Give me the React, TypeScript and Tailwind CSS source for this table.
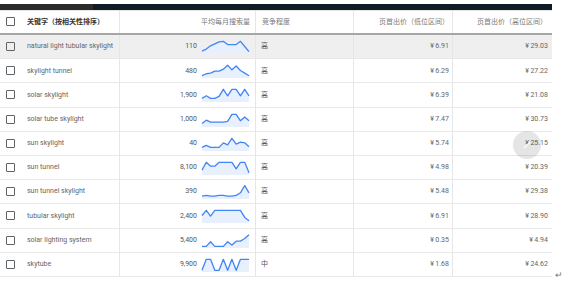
import React from "react";

type Row = { kw: string; vol: string; comp: string; low: string; high: string; pts: number[] };

const rows: Row[] = [
  { kw: "natural light tubular skylight", vol: "110", comp: "高", low: "6.91", high: "29.03", pts: [0.15, 0.3, 0.55, 0.7, 0.85, 0.9, 0.65, 0.65, 0.65, 0.9, 0.5, 0.1] },
  { kw: "skylight tunnel", vol: "480", comp: "高", low: "6.29", high: "27.22", pts: [0.1, 0.25, 0.3, 0.45, 0.45, 0.6, 0.9, 0.55, 0.85, 0.5, 0.3, 0.1] },
  { kw: "solar skylight", vol: "1,900", comp: "高", low: "6.39", high: "21.08", pts: [0.2, 0.4, 0.2, 0.2, 0.35, 0.9, 0.4, 0.9, 0.9, 0.4, 0.9, 0.4] },
  { kw: "solar tube skylight", vol: "1,000", comp: "高", low: "7.47", high: "30.73", pts: [0.2, 0.45, 0.3, 0.3, 0.3, 0.3, 0.35, 0.9, 0.9, 0.4, 0.7, 0.4] },
  { kw: "sun skylight", vol: "40", comp: "高", low: "5.74", high: "25.15", pts: [0.2, 0.35, 0.2, 0.2, 0.2, 0.55, 0.4, 0.9, 0.45, 0.6, 0.55, 0.25] },
  { kw: "sun tunnel", vol: "8,100", comp: "高", low: "4.98", high: "20.39", pts: [0.3, 0.9, 0.6, 0.6, 0.9, 0.9, 0.9, 0.9, 0.4, 0.9, 0.9, 0.1] },
  { kw: "sun tunnel skylight", vol: "390", comp: "高", low: "5.48", high: "29.38", pts: [0.15, 0.2, 0.15, 0.15, 0.2, 0.2, 0.15, 0.15, 0.2, 0.4, 0.95, 0.4] },
  { kw: "tubular skylight", vol: "2,400", comp: "高", low: "6.91", high: "28.90", pts: [0.5, 0.9, 0.45, 0.9, 0.9, 0.9, 0.9, 0.9, 0.9, 0.9, 0.35, 0.1] },
  { kw: "solar lighting system", vol: "5,400", comp: "高", low: "0.35", high: "4.94", pts: [0.05, 0.05, 0.4, 0.05, 0.05, 0.05, 0.4, 0.15, 0.45, 0.45, 0.65, 0.95] },
  { kw: "skytube", vol: "9,900", comp: "中", low: "1.68", high: "24.62", pts: [0.05, 0.9, 0.9, 0.05, 0.05, 0.9, 0.05, 0.9, 0.05, 0.9, 0.9, 0.9] },
];

function Spark({ pts }: { pts: number[] }) {
  const w = 47;
  const h = 15;
  const coords = pts.map((v, i) => [(i * w) / (pts.length - 1), 1 + (1 - v) * 13]);
  const line = coords.map(([x, y]) => `${x.toFixed(2)},${y.toFixed(2)}`).join(" ");
  const area = `0,${h} ${line} ${w},${h}`;
  return (
    <svg width={w} height={h} viewBox={`0 0 ${w} ${h}`} className="shrink-0 overflow-visible">
      <polygon points={area} fill="#e8f0fe" />
      <polyline points={line} fill="none" stroke="#4285f4" strokeWidth={1.3} strokeLinejoin="round" />
    </svg>
  );
}

function Box() {
  return <div className="w-[9px] h-[9px] border-[1.5px] border-[#5f6368] rounded-[1px] shrink-0" />;
}

function Price({ v }: { v: string }) {
  return (
    <span className="whitespace-nowrap">
      <span className="mr-[1.5px]">¥</span>
      {v}
    </span>
  );
}

export default function App() {
  const font = { fontFamily: 'Roboto, "Noto Sans CJK SC", sans-serif' };
  return (
    <div className="w-[575px] h-[285px] bg-white relative overflow-hidden" style={font}>
      <div className="h-[4px]" />
      <div className="flex w-[552px] h-[5.5px]">
        <div className="w-[93px] bg-[#2a2a2a]" />
        <div className="flex-1 bg-[#0f1b26]" />
      </div>
      <div className="flex items-end">
        <div className="w-[552px]">
          {/* header */}
          <div className="flex h-[25.5px] border-t border-[#e4e4e4] border-b-2 border-b-[#a6a6a6] text-[7px] text-[#7a7a7a]">
            <div className="w-[120px] flex items-center pl-[6px] gap-[12px] border-r border-[#e6e6e6]">
              <Box />
              <span className="font-bold text-[#333]">关键字（按相关性排序）</span>
            </div>
            <div className="w-[136px] flex items-center justify-end pr-[5px] border-r border-[#e6e6e6]">平均每月搜索量</div>
            <div className="w-[98px] flex items-center pl-[6px] border-r border-[#e6e6e6]">竞争程度</div>
            <div className="w-[99px] flex items-center justify-end pr-[3px] border-r border-[#e6e6e6]">页首出价（低位区间）</div>
            <div className="w-[99px] flex items-center justify-end pr-[5px]">页首出价（高位区间）</div>
          </div>
          {rows.map((r, i) => (
            <div
              key={i}
              className={`flex h-[24.2px] border-b border-[#e8e8e8] text-[7px] text-[#666] ${i === 0 ? "bg-[#efefef]" : "bg-white"}`}
            >
              <div className="w-[120px] flex items-center pl-[6px] gap-[12px] border-r border-[#e6e6e6]">
                <Box />
                <span className="whitespace-nowrap">{r.kw}</span>
              </div>
              <div className="w-[136px] flex items-center justify-end pr-[6px] gap-[5px] border-r border-[#e6e6e6]">
                <span className="text-[#555]">{r.vol}</span>
                <Spark pts={r.pts} />
              </div>
              <div className="w-[98px] flex items-center pl-[5px] border-r border-[#e6e6e6] text-[#555]">{r.comp}</div>
              <div className="w-[99px] flex items-center justify-end pr-[3px] border-r border-[#e6e6e6]">
                <Price v={r.low} />
              </div>
              <div className="w-[99px] flex items-center justify-end pr-[4px]">
                <Price v={r.high} />
              </div>
            </div>
          ))}
        </div>
        <span className="text-[9px] leading-none text-[#777] ml-[3px] mb-[-3px]">↵</span>
      </div>
      <div className="absolute left-[513px] top-[131px] w-[28px] h-[28px] rounded-full bg-black/10 flex items-center justify-center">
        <svg width="8" height="8" viewBox="0 0 8 8">
          <line x1="1" y1="7" x2="7" y2="1" stroke="#ffffff" strokeWidth="1.2" />
        </svg>
      </div>
    </div>
  );
}
